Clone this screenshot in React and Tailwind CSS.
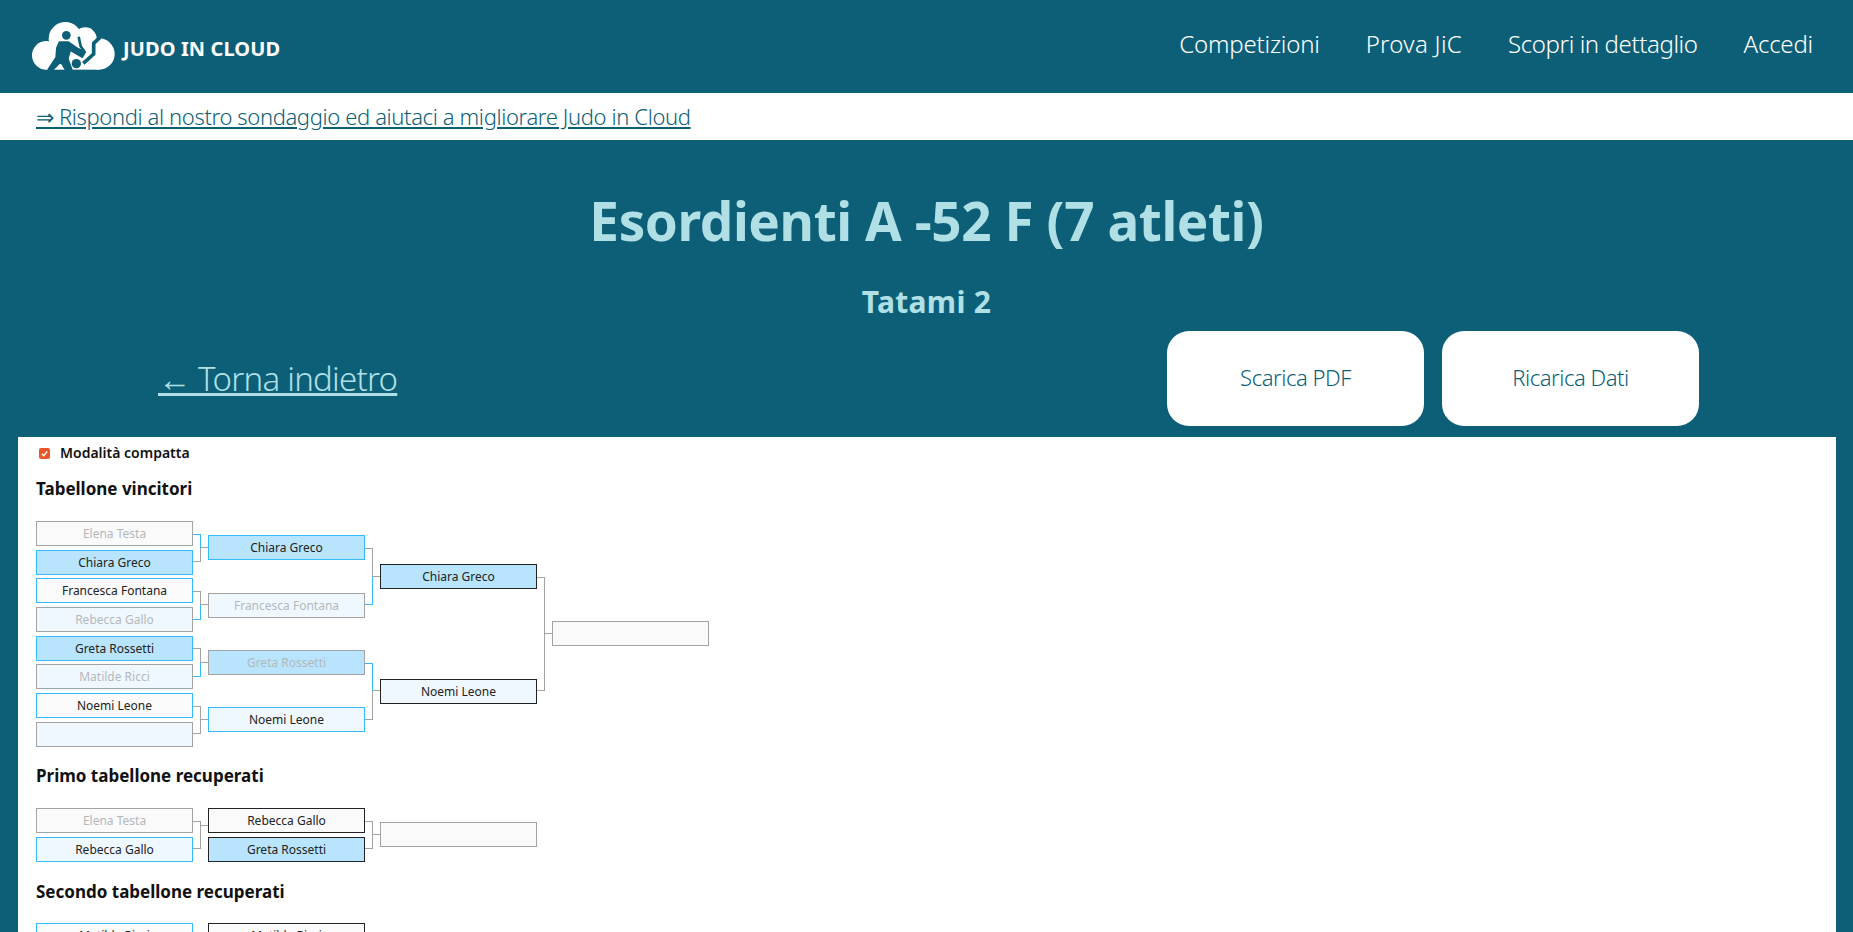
const GRAY = '#a3a3a3';
const BLUE = '#33bbfb';

// border + background of a bracket box
const styles = {
  g: 'border-[#a3a3a3] bg-[#fafafa]',
  ga: 'border-[#a3a3a3] bg-[#f0f8ff]',
  gl: 'border-[#a3a3a3] bg-[#b8e5fd]',
  b: 'border-[#33bbfb] bg-[#fafafa]',
  ba: 'border-[#33bbfb] bg-[#f0f8ff]',
  bl: 'border-[#33bbfb] bg-[#b8e5fd]',
  d: 'border-[#222222] bg-[#fafafa]',
  da: 'border-[#222222] bg-[#f0f8ff]',
  dl: 'border-[#222222] bg-[#b8e5fd]',
};

const Box = ({name, kind, dim}) => (
  <div className={`w-[157px] h-[25px] border flex items-center justify-center pt-px text-[12px] ${styles[kind]} ${dim ? 'text-[#b4b8bb]' : 'text-[#222222]'}`}>
    {name}
  </div>
);

const Connector = ({height, groups}) => (
  <svg width="15" height={height} className="shrink-0" shapeRendering="crispEdges">
    {groups.map((g, i) => (
      <g key={i} fill="none">
        <path d={`M0 ${g.top + 0.5}H7.5V${g.out + 0.5}`} stroke={g.topColor || GRAY} />
        <path d={`M0 ${g.bottom + 0.5}H7.5V${g.out + 0.5}`} stroke={g.bottomColor || GRAY} />
        <path d={`M7.5 ${g.out + 0.5}H15`} stroke={GRAY} />
      </g>
    ))}
  </svg>
);

const Column = ({height, boxes}) => (
  <div className="flex flex-col justify-around shrink-0" style={{height}}>
    {boxes.map((b, i) => <Box key={i} {...b} />)}
  </div>
);

const winners = [
  [
    {name: 'Elena Testa', kind: 'g', dim: true},
    {name: 'Chiara Greco', kind: 'bl'},
    {name: 'Francesca Fontana', kind: 'b'},
    {name: 'Rebecca Gallo', kind: 'ga', dim: true},
    {name: 'Greta Rossetti', kind: 'bl'},
    {name: 'Matilde Ricci', kind: 'ga', dim: true},
    {name: 'Noemi Leone', kind: 'b'},
    {name: '', kind: 'ga'},
  ],
  [
    {name: 'Chiara Greco', kind: 'bl'},
    {name: 'Francesca Fontana', kind: 'ga', dim: true},
    {name: 'Greta Rossetti', kind: 'gl', dim: true},
    {name: 'Noemi Leone', kind: 'ba'},
  ],
  [
    {name: 'Chiara Greco', kind: 'dl'},
    {name: 'Noemi Leone', kind: 'da'},
  ],
  [{name: '', kind: 'g'}],
];

const winnerLinks = [
  [
    {top: 15, bottom: 42, out: 28, topColor: BLUE},
    {top: 72, bottom: 100, out: 85, bottomColor: BLUE},
    {top: 129, bottom: 157, out: 143, bottomColor: BLUE},
    {top: 187, bottom: 214, out: 200},
  ],
  [
    {top: 29, bottom: 85, out: 57, bottomColor: BLUE},
    {top: 144, bottom: 200, out: 171, topColor: BLUE},
  ],
  [{top: 58, bottom: 171, out: 114}],
];

const Heading = ({children, className}) => (
  <h3 className={`text-[17px] leading-[22px] font-bold text-[#111111] ${className}`}>{children}</h3>
);

const Logo = () => (
  <svg width="95" height="58" viewBox="0 0 285 174" className="shrink-0">
    <g fill="#fff">
      <circle cx="55" cy="112" r="43" />
      <circle cx="112" cy="62" r="50" />
      <circle cx="172" cy="62" r="34" />
      <circle cx="213" cy="108" r="47" />
      <rect x="55" y="100" width="158" height="55" />
    </g>
    <circle cx="115" cy="52" r="13" fill="#0d5f78" />
    <circle cx="145" cy="137" r="14" fill="#0d5f78" />
    <path fill="#0d5f78" stroke="#0d5f78" strokeWidth="4" strokeLinejoin="round" d="M94 72L122 72L170 106L163 118L127 97L120 122L132 155L112 155L98 132L75 155L60 155L84 118L86 90Z" />
    <g fill="none" stroke="#0d5f78" strokeLinejoin="round">
      <path d="M152 56L158 85L172 105" strokeWidth="8" />
      <path d="M216 58L197 76L197 108L166 136" strokeWidth="11" />
    </g>
  </svg>
);

const App = () => {
  return (
    <div className="h-[932px] overflow-hidden bg-[#0d5f78] font-['Noto_Sans',sans-serif]">
      <header className="h-[93px] flex items-center justify-between pl-7 pr-10">
        <div className="flex items-center">
          <Logo />
          <span className="text-[20px] font-bold text-white tracking-[0.1px] translate-y-[2px]">JUDO IN CLOUD</span>
        </div>
        <nav className="flex items-center gap-[46px] text-[24px] font-light text-white -translate-y-[3px]">
          <a className="tracking-[-0.2px]">Competizioni</a>
          <a className="tracking-[0.3px]">Prova JiC</a>
          <a className="tracking-[-0.4px]">Scopri in dettaglio</a>
          <a className="tracking-[-0.2px]">Accedi</a>
        </nav>
      </header>

      <div className="h-[47px] bg-white px-9 flex items-center">
        <a className="text-[22px] tracking-[-0.37px] font-light text-[#0d5f78] underline">⇒ Rispondi al nostro sondaggio ed aiutaci a migliorare Judo in Cloud</a>
      </div>

      <main className="text-[#b0e0e6]">
        <h1 className="text-center text-[53px] tracking-[-0.4px] leading-[66px] font-bold pt-[48px]">Esordienti A -52 F (7 atleti)</h1>
        <h2 className="text-center text-[30px] tracking-[0.3px] leading-[38px] font-bold mt-[29px]">Tatami 2</h2>
        <div className="flex items-center justify-between pl-[158px] pr-[154px] mt-[10px]">
          <a className="text-[33px] tracking-[-0.75px] font-light underline">← Torna indietro</a>
          <div className="flex gap-[18px]">
            <button className="w-[257px] h-[95px] pb-[2px] bg-white rounded-[22px] text-[22px] tracking-[-0.45px] font-light text-[#0d5f78]">Scarica PDF</button>
            <button className="w-[257px] h-[95px] pb-[2px] bg-white rounded-[22px] text-[22px] tracking-[-0.45px] font-light text-[#0d5f78]">Ricarica Dati</button>
          </div>
        </div>
      </main>

      <section className="ml-[18px] mr-[17px] mt-[11px] bg-white h-[600px] px-[18px]">
        <div className="flex items-center h-[32px] pl-[3px] gap-[10px]">
          <span className="w-[11px] h-[11px] bg-[#e9572b] rounded-[2px] flex items-center justify-center">
            <svg width="9" height="9" viewBox="0 0 10 10"><path d="M2 5.200L4.200 7.500L8 2.800" fill="none" stroke="#fff" strokeWidth="1.500" /></svg>
          </span>
          <span className="text-[14px] font-semibold text-[#111111] pb-[2px]">Modalità compatta</span>
        </div>
        <Heading className="mt-[9px]">Tabellone vincitori</Heading>
        <div className="flex mt-[19px]">
          <Column height={229.6} boxes={winners[0]} />
          <Connector height={229.6} groups={winnerLinks[0]} />
          <Column height={229.6} boxes={winners[1]} />
          <Connector height={229.6} groups={winnerLinks[1]} />
          <Column height={229.6} boxes={winners[2]} />
          <Connector height={229.6} groups={winnerLinks[2]} />
          <Column height={229.6} boxes={winners[3]} />
        </div>

        <Heading className="mt-[16px]">Primo tabellone recuperati</Heading>
        <div className="flex mt-[19px]">
          <Column height={58} boxes={[{name: 'Elena Testa', kind: 'g', dim: true}, {name: 'Rebecca Gallo', kind: 'ba'}]} />
          <Connector height={58} groups={[{top: 15, bottom: 42, out: 19}]} />
          <Column height={58} boxes={[{name: 'Rebecca Gallo', kind: 'd'}, {name: 'Greta Rossetti', kind: 'dl'}]} />
          <Connector height={58} groups={[{top: 15, bottom: 42, out: 28}]} />
          <Column height={58} boxes={[{name: '', kind: 'g'}]} />
        </div>

        <Heading className="mt-[17px]">Secondo tabellone recuperati</Heading>
        <div className="flex mt-[18px]">
          <Column height={58} boxes={[{name: 'Matilde Ricci', kind: 'b'}, {name: '', kind: 'ga'}]} />
          <Connector height={58} groups={[{top: 15, bottom: 42, out: 28}]} />
          <Column height={58} boxes={[{name: 'Matilde Ricci', kind: 'd'}, {name: '', kind: 'da'}]} />
        </div>
      </section>
    </div>
  );
};

export default App;
